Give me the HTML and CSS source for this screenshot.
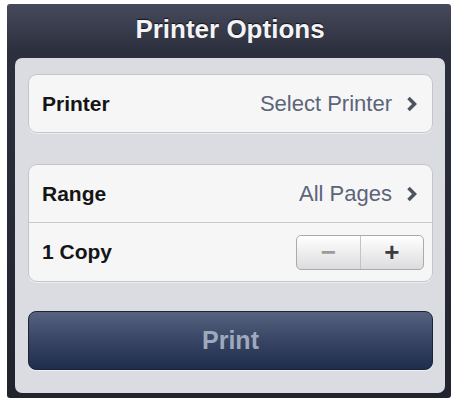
FILE: index.html
```html
<!DOCTYPE html>
<html lang="en">

<head>
    <meta charset="UTF-8">
    <meta name="viewport" content="width=device-width, initial-scale=1.0">
    <title>Printer Options</title>
    <link rel="stylesheet" href="styles.css">
</head>

<body>

    <div class="popover">
        <div class="titlebar">
            <h1>Printer Options</h1>
        </div>

        <div class="panel">
            <div class="group">
                <div class="row">
                    <span class="label">Printer</span>
                    <span class="value">Select Printer
                        <svg class="chevron" width="12" height="18" viewBox="0 0 12 18">
                            <path d="M2.5 3 L8.5 9 L2.5 15" />
                        </svg>
                    </span>
                </div>
            </div>

            <div class="group">
                <div class="row">
                    <span class="label">Range</span>
                    <span class="value">All Pages
                        <svg class="chevron" width="12" height="18" viewBox="0 0 12 18">
                            <path d="M2.5 3 L8.5 9 L2.5 15" />
                        </svg>
                    </span>
                </div>
                <div class="row row-copies">
                    <span class="label">1 Copy</span>
                    <div class="stepper">
                        <button class="minus">&minus;</button>
                        <button class="plus">+</button>
                    </div>
                </div>
            </div>

            <button class="print">Print</button>
        </div>
    </div>

</body>

</html>
```

FILE: styles.css
```css
* {
    margin: 0;
    box-sizing: border-box;
}

body {
    background-color: #ffffff;
    font-family: 'Liberation Sans', Arial, sans-serif;
}

.popover {
    width: 444px;
    height: 394px;
    margin: 4px 0 0 7px;
    background: linear-gradient(#474a5a 0%, #2c2f3e 12%, #21232e 100%);
    border-radius: 3px;
    padding: 0 6px 5px 8px;
    display: flex;
    flex-direction: column;
}

.titlebar {
    height: 55px;
    display: flex;
    align-items: center;
    justify-content: center;
}

h1 {
    font-size: 26px;
    font-weight: bold;
    color: #f4f4f6;
    text-shadow: 0 -1px 1px #101218;
    padding-bottom: 4px;
}

.panel {
    flex: 1;
    background-color: #dbdce1;
    border-radius: 7px;
    padding: 16px 12px 23px 13px;
    display: flex;
    flex-direction: column;
}

.group {
    background-color: #f6f6f7;
    border: 1px solid #c4c5ca;
    border-radius: 9px;
    box-shadow: 0 1px 0 #eeeff2;
    margin-bottom: 31px;
}

.group:nth-child(2) {
    margin-bottom: 29px;
}

.row {
    height: 57px;
    display: flex;
    align-items: center;
    justify-content: space-between;
    padding: 0 14px 0 13px;
}

.row + .row {
    border-top: 1px solid #c9cacd;
    height: 59px;
}

.label {
    font-size: 21px;
    font-weight: bold;
    color: #151515;
}

.value {
    font-size: 22px;
    color: #5c6478;
    display: flex;
    align-items: center;
    gap: 14px;
}

.chevron path {
    fill: none;
    stroke: #4e5360;
    stroke-width: 3.5;
}

.row-copies {
    padding-right: 8px;
}

.stepper {
    display: flex;
    width: 128px;
    height: 35px;
    border: 1px solid #a9aaae;
    border-radius: 5px;
    background: linear-gradient(#ffffff, #dcdcde);
    overflow: hidden;
}

.stepper button {
    flex: 1;
    border: none;
    background: none;
    font-family: 'Liberation Sans', Arial, sans-serif;
    font-size: 26px;
    font-weight: bold;
    line-height: 1;
}

.stepper .minus {
    color: #9a9ba0;
    border-right: 1px solid #c2c3c7;
}

.stepper .plus {
    color: #3a3c42;
}

.print {
    height: 59px;
    border: 1px solid #1c2438;
    border-radius: 8px;
    background: linear-gradient(#56627f 0%, #3a4766 45%, #1f2d4c 100%);
    color: #9ea9bd;
    font-family: 'Liberation Sans', Arial, sans-serif;
    font-size: 25px;
    font-weight: bold;
    box-shadow: 0 1px 0 #eef0f4;
}
```
